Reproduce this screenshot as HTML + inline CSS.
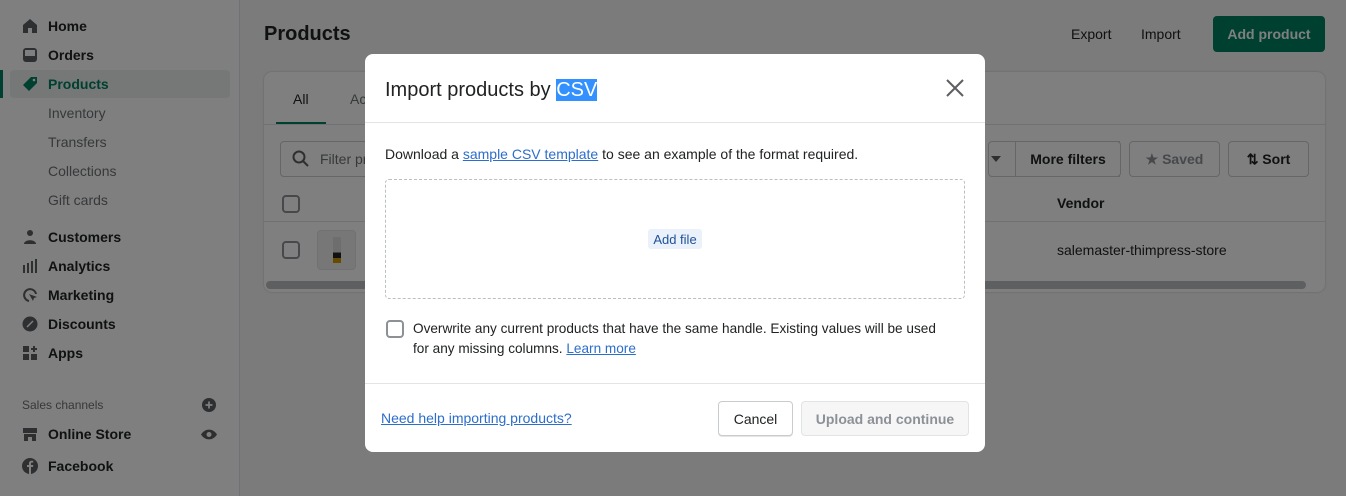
<!DOCTYPE html>
<html><head><meta charset="utf-8"><style>
*{box-sizing:border-box;margin:0;padding:0}
body{width:1346px;height:496px;overflow:hidden;position:relative;font-family:"Liberation Sans",sans-serif;font-size:14px;color:#202223;background:#f6f6f7}
.side{position:absolute;left:0;top:0;width:240px;height:496px;background:#fff;border-right:1px solid #e1e3e5}
.nav{position:absolute;left:48px;font-size:14px;font-weight:bold;color:#202223;transform:translateY(-50%)}
.sub{font-weight:normal;color:#6d7175}
.ic{position:absolute;left:22px;width:16px;height:16px;transform:translateY(-50%)}
.abs{position:absolute}
.ov{position:absolute;inset:0;background:rgba(0,0,0,.5)}
.btn{position:absolute;border:1px solid #c9cccf;border-radius:4px;background:#fff;display:flex;align-items:center;justify-content:center;font-size:14px;font-weight:bold;color:#202223}
.cb{position:absolute;width:18px;height:18px;border:2px solid #8c9196;border-radius:4px;background:#fff}
a{color:#2c6ecb;text-decoration:underline}
</style></head><body>
<div class="side">
<div class="abs" style="left:10px;top:70px;width:220px;height:28px;background:#edeeef;border-radius:4px"></div>
<div class="abs" style="left:0;top:70px;width:3px;height:28px;background:#008060"></div>
<svg class="ic" style="top:26px" viewBox="0 0 16 16"><path d="M8 1 1 7v8h5v-5h4v5h5V7z" fill="#5c5f62"/></svg>
<div class="nav" style="top:26px">Home</div>
<svg class="ic" style="top:55px" viewBox="0 0 16 16"><rect x="1" y="1" width="14" height="14" rx="3" fill="#5c5f62"/><rect x="3" y="3" width="10" height="6" fill="#fff"/></svg>
<div class="nav" style="top:55px">Orders</div>
<svg class="ic" style="top:84px" viewBox="0 0 16 16"><path d="M9 1h6v6l-8 8-6-6z" fill="#008060"/><circle cx="12" cy="4" r="1.3" fill="#fff"/></svg>
<div class="nav" style="top:84px;color:#008060">Products</div>
<div class="nav sub" style="top:113px">Inventory</div>
<div class="nav sub" style="top:142px">Transfers</div>
<div class="nav sub" style="top:171px">Collections</div>
<div class="nav sub" style="top:200px">Gift cards</div>
<svg class="ic" style="top:237px" viewBox="0 0 16 16"><circle cx="8" cy="4" r="3" fill="#5c5f62"/><path d="M2 15c0-5 12-5 12 0z" fill="#5c5f62"/></svg>
<div class="nav" style="top:237px">Customers</div>
<svg class="ic" style="top:266px" viewBox="0 0 16 16"><path d="M2 7v8M6 5v10M10 3v12M14 1v14" stroke="#5c5f62" stroke-width="2"/></svg>
<div class="nav" style="top:266px">Analytics</div>
<svg class="ic" style="top:295px" viewBox="0 0 16 16"><path d="M14 7A6 6 0 1 0 7 14" stroke="#5c5f62" stroke-width="2" fill="none"/><path d="M7 7l8 3-3 1-1 3z" fill="#5c5f62"/></svg>
<div class="nav" style="top:295px">Marketing</div>
<svg class="ic" style="top:324px" viewBox="0 0 16 16"><circle cx="8" cy="8" r="7.5" fill="#5c5f62"/><path d="M5 11l6-6" stroke="#fff" stroke-width="1.5"/></svg>
<div class="nav" style="top:324px">Discounts</div>
<svg class="ic" style="top:353px" viewBox="0 0 16 16"><rect x="1" y="1" width="6" height="6" fill="#5c5f62"/><rect x="1" y="9" width="6" height="6" fill="#5c5f62"/><rect x="9" y="9" width="6" height="6" fill="#5c5f62"/><path d="M12 1v6M9 4h6" stroke="#5c5f62" stroke-width="2"/></svg>
<div class="nav" style="top:353px">Apps</div>
<div class="abs" style="left:22px;top:398px;font-size:12px;color:#6d7175">Sales channels</div>
<svg class="abs" style="left:202px;top:398px" width="14" height="14" viewBox="0 0 16 16"><circle cx="8" cy="8" r="8" fill="#5c5f62"/><path d="M8 4v8M4 8h8" stroke="#fff" stroke-width="2"/></svg>
<svg class="ic" style="top:434px" viewBox="0 0 16 16"><path d="M1 2h14v5H1z" fill="#5c5f62"/><path d="M2 8h12v7h-4v-4H6v4H2z" fill="#5c5f62"/></svg>
<div class="nav" style="top:434px">Online Store</div>
<svg class="abs" style="left:200px;top:429px" width="18" height="11" viewBox="0 0 18 11"><path d="M1 5.5C5-1 13-1 17 5.5 13 12 5 12 1 5.5z" fill="#5c5f62"/><circle cx="9" cy="5.5" r="2.5" fill="#fff"/></svg>
<svg class="ic" style="top:466px" viewBox="0 0 16 16"><circle cx="8" cy="8" r="8" fill="#5c5f62"/><path d="M9 16V9h2l.3-2H9V5.5c0-.6.3-1 1-1h1.3V2.7H9.6C8 2.7 7 3.7 7 5.3V7H5v2h2v7z" fill="#fff"/></svg>
<div class="nav" style="top:466px">Facebook</div>
</div>

<div class="abs" style="left:264px;top:23px;font-size:20px;font-weight:bold">Products</div>
<div class="abs" style="left:1071px;top:26px">Export</div>
<div class="abs" style="left:1141px;top:26px">Import</div>
<div class="abs" style="left:1213px;top:16px;width:112px;height:36px;background:#008060;border-radius:4px;color:#fff;font-weight:bold;display:flex;align-items:center;justify-content:center">Add product</div>

<div class="abs" style="left:264px;top:72px;width:1061px;height:220px;background:#fff;border-radius:8px;box-shadow:0 0 2px rgba(0,0,0,.2)">
 <div class="abs" style="left:29px;top:19px">All</div>
 <div class="abs" style="left:86px;top:19px;color:#6d7175">Ac</div>
 <div class="abs" style="left:12px;top:50px;width:50px;height:3px;background:#008060"></div>
 <div class="abs" style="left:0;top:52px;width:1061px;height:1px;background:#e1e3e5"></div>
 <div class="abs" style="left:16px;top:69px;width:700px;height:36px;border:1px solid #c9cccf;border-radius:4px"></div>
 <svg class="abs" style="left:28px;top:78px" width="18" height="18" viewBox="0 0 18 18"><circle cx="7" cy="7" r="5.5" stroke="#5c5f62" stroke-width="2" fill="none"/><path d="M11 11l5 5" stroke="#5c5f62" stroke-width="2"/></svg>
 <div class="abs" style="left:56px;top:79px;color:#6d7175">Filter products</div>
 <div class="abs" style="left:724px;top:69px;width:132px;height:36px;border:1px solid #c9cccf;border-radius:4px 0 0 4px"></div>
 <div class="abs" style="left:727px;top:84px;border:5px solid transparent;border-top:6px solid #5c5f62;border-bottom:0"></div>
 <div class="btn" style="left:751px;top:69px;width:106px;height:36px;border-radius:0 4px 4px 0">More filters</div>
 <div class="btn" style="left:865px;top:69px;width:91px;height:36px;color:#8c9196">★&nbsp;Saved</div>
 <div class="btn" style="left:964px;top:69px;width:81px;height:36px">⇅&nbsp;Sort</div>
 <div class="cb" style="left:18px;top:123px"></div>
 <div class="abs" style="left:793px;top:123px;font-weight:bold">Vendor</div>
 <div class="abs" style="left:0;top:149px;width:1061px;height:1px;background:#e1e3e5"></div>
 <div class="cb" style="left:18px;top:169px"></div>
 <div class="abs" style="left:53px;top:158px;width:39px;height:40px;border:1px solid #e1e3e5;border-radius:4px;background:#eee"><div class="abs" style="left:15px;top:6px;width:8px;height:26px;background:linear-gradient(#ddd 60%,#222 60%,#222 80%,#c90 80%)"></div></div>
 <div class="abs" style="left:793px;top:170px">salemaster-thimpress-store</div>
 <div class="abs" style="left:2px;top:209px;width:1040px;height:8px;background:#babfc3;border-radius:4px"></div>
</div>

<div class="ov"></div>

<div class="abs" style="left:365px;top:54px;width:620px;height:398px;background:#fff;border-radius:8px;overflow:hidden">
 <div class="abs" style="left:20px;top:25px;font-size:20px;color:#202223">Import products by <span style="background:#3390ff;color:#fff">CSV</span></div>
 <svg class="abs" style="left:581px;top:25px" width="18" height="18" viewBox="0 0 18 18"><path d="M1 1l16 16M17 1 1 17" stroke="#5c5f62" stroke-width="2"/></svg>
 <div class="abs" style="left:0;top:68px;width:620px;height:1px;background:#e1e3e5"></div>
 <div class="abs" style="left:20px;top:92px;font-size:14px">Download a <a>sample CSV template</a> to see an example of the format required.</div>
 <div class="abs" style="left:20px;top:125px;width:580px;height:120px;border:1px dashed #babfc3;border-radius:4px"></div>
 <div class="abs" style="left:283px;top:175px;width:54px;height:20px;background:#eaf1fb;border-radius:3px;color:#1f5199;font-size:13px;display:flex;align-items:center;justify-content:center">Add file</div>
 <div class="cb" style="left:21px;top:266px;border-color:#8c9196"></div>
 <div class="abs" style="left:48px;top:265px;font-size:13.6px;line-height:20px;white-space:nowrap">Overwrite any current products that have the same handle. Existing values will be used<br>for any missing columns. <a>Learn more</a></div>
 <div class="abs" style="left:0;top:329px;width:620px;height:1px;background:#e1e3e5"></div>
 <div class="abs" style="left:16px;top:356px;font-size:14px"><a>Need help importing products?</a></div>
 <div class="btn" style="left:353px;top:347px;width:75px;height:35px;font-weight:normal;box-shadow:0 1px 0 rgba(0,0,0,.1)">Cancel</div>
 <div class="btn" style="left:436px;top:347px;width:168px;height:35px;background:#f6f6f7;border-color:#e1e3e5;color:#8c9196">Upload and continue</div>
</div>
</body></html>
